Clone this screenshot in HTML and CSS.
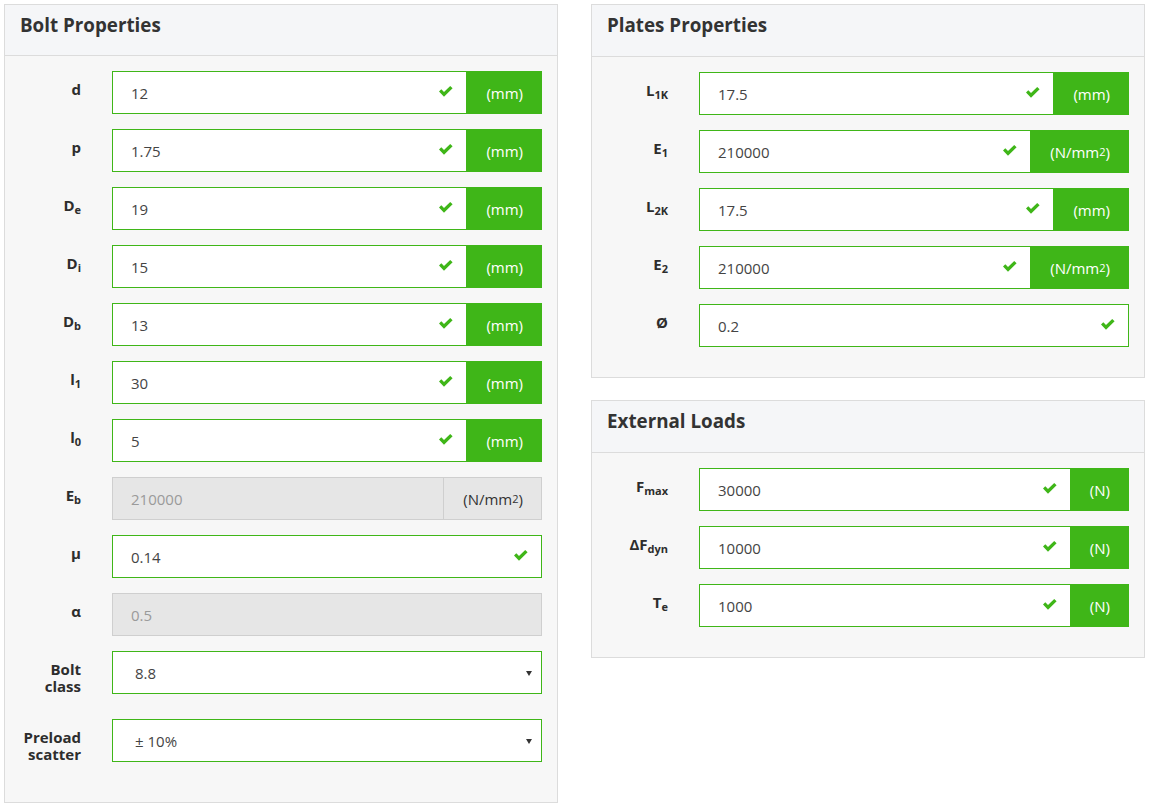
FILE: index.html
```html
<!DOCTYPE html>
<html>
<head>
<meta charset="utf-8">
<link rel="stylesheet" href="styles.css">
</head>
<body>
<div class="page">
  <div class="column">
    <section class="panel">
      <div class="panel-heading"><h3>Bolt Properties</h3></div>
      <div class="panel-body">
        <div class="form-group">
          <label class="control-label">d</label>
          <div class="input-group">
            <div class="input-wrap"><input class="form-control" value="12"><svg class="check" viewBox="0 0 14 11"><path d="M0 5.6 L2.3 3.3 L5 6 L11.2 0 L13.6 2.3 L5 10.8 Z"/></svg></div>
            <span class="addon">(mm)</span>
          </div>
        </div>
        <div class="form-group">
          <label class="control-label">p</label>
          <div class="input-group">
            <div class="input-wrap"><input class="form-control" value="1.75"><svg class="check" viewBox="0 0 14 11"><path d="M0 5.6 L2.3 3.3 L5 6 L11.2 0 L13.6 2.3 L5 10.8 Z"/></svg></div>
            <span class="addon">(mm)</span>
          </div>
        </div>
        <div class="form-group">
          <label class="control-label">D<sub>e</sub></label>
          <div class="input-group">
            <div class="input-wrap"><input class="form-control" value="19"><svg class="check" viewBox="0 0 14 11"><path d="M0 5.6 L2.3 3.3 L5 6 L11.2 0 L13.6 2.3 L5 10.8 Z"/></svg></div>
            <span class="addon">(mm)</span>
          </div>
        </div>
        <div class="form-group">
          <label class="control-label">D<sub>i</sub></label>
          <div class="input-group">
            <div class="input-wrap"><input class="form-control" value="15"><svg class="check" viewBox="0 0 14 11"><path d="M0 5.6 L2.3 3.3 L5 6 L11.2 0 L13.6 2.3 L5 10.8 Z"/></svg></div>
            <span class="addon">(mm)</span>
          </div>
        </div>
        <div class="form-group">
          <label class="control-label">D<sub>b</sub></label>
          <div class="input-group">
            <div class="input-wrap"><input class="form-control" value="13"><svg class="check" viewBox="0 0 14 11"><path d="M0 5.6 L2.3 3.3 L5 6 L11.2 0 L13.6 2.3 L5 10.8 Z"/></svg></div>
            <span class="addon">(mm)</span>
          </div>
        </div>
        <div class="form-group">
          <label class="control-label">l<sub>1</sub></label>
          <div class="input-group">
            <div class="input-wrap"><input class="form-control" value="30"><svg class="check" viewBox="0 0 14 11"><path d="M0 5.6 L2.3 3.3 L5 6 L11.2 0 L13.6 2.3 L5 10.8 Z"/></svg></div>
            <span class="addon">(mm)</span>
          </div>
        </div>
        <div class="form-group">
          <label class="control-label">l<sub>0</sub></label>
          <div class="input-group">
            <div class="input-wrap"><input class="form-control" value="5"><svg class="check" viewBox="0 0 14 11"><path d="M0 5.6 L2.3 3.3 L5 6 L11.2 0 L13.6 2.3 L5 10.8 Z"/></svg></div>
            <span class="addon">(mm)</span>
          </div>
        </div>
        <div class="form-group">
          <label class="control-label">E<sub>b</sub></label>
          <div class="input-group disabled">
            <div class="input-wrap"><input class="form-control" value="210000" disabled></div>
            <span class="addon">(N/mm<sup>2</sup>)</span>
          </div>
        </div>
        <div class="form-group">
          <label class="control-label">μ</label>
          <div class="input-group">
            <div class="input-wrap"><input class="form-control" value="0.14"><svg class="check" viewBox="0 0 14 11"><path d="M0 5.6 L2.3 3.3 L5 6 L11.2 0 L13.6 2.3 L5 10.8 Z"/></svg></div>
          </div>
        </div>
        <div class="form-group">
          <label class="control-label">α</label>
          <div class="input-group disabled">
            <div class="input-wrap"><input class="form-control" value="0.5" disabled></div>
          </div>
        </div>
        <div class="form-group">
          <label class="control-label">Bolt<br>class</label>
          <div class="select-wrap">
            <select class="form-control select"><option>8.8</option></select>
          </div>
        </div>
        <div class="form-group">
          <label class="control-label">Preload<br>scatter</label>
          <div class="select-wrap">
            <select class="form-control select"><option>± 10%</option></select>
          </div>
        </div>
      </div>
    </section>
  </div>

  <div class="column">
    <section class="panel panel-right">
      <div class="panel-heading"><h3>Plates Properties</h3></div>
      <div class="panel-body">
        <div class="form-group">
          <label class="control-label">L<sub>1K</sub></label>
          <div class="input-group">
            <div class="input-wrap"><input class="form-control" value="17.5"><svg class="check" viewBox="0 0 14 11"><path d="M0 5.6 L2.3 3.3 L5 6 L11.2 0 L13.6 2.3 L5 10.8 Z"/></svg></div>
            <span class="addon">(mm)</span>
          </div>
        </div>
        <div class="form-group">
          <label class="control-label">E<sub>1</sub></label>
          <div class="input-group">
            <div class="input-wrap"><input class="form-control" value="210000"><svg class="check" viewBox="0 0 14 11"><path d="M0 5.6 L2.3 3.3 L5 6 L11.2 0 L13.6 2.3 L5 10.8 Z"/></svg></div>
            <span class="addon">(N/mm<sup>2</sup>)</span>
          </div>
        </div>
        <div class="form-group">
          <label class="control-label">L<sub>2K</sub></label>
          <div class="input-group">
            <div class="input-wrap"><input class="form-control" value="17.5"><svg class="check" viewBox="0 0 14 11"><path d="M0 5.6 L2.3 3.3 L5 6 L11.2 0 L13.6 2.3 L5 10.8 Z"/></svg></div>
            <span class="addon">(mm)</span>
          </div>
        </div>
        <div class="form-group">
          <label class="control-label">E<sub>2</sub></label>
          <div class="input-group">
            <div class="input-wrap"><input class="form-control" value="210000"><svg class="check" viewBox="0 0 14 11"><path d="M0 5.6 L2.3 3.3 L5 6 L11.2 0 L13.6 2.3 L5 10.8 Z"/></svg></div>
            <span class="addon">(N/mm<sup>2</sup>)</span>
          </div>
        </div>
        <div class="form-group">
          <label class="control-label">Ø</label>
          <div class="input-group">
            <div class="input-wrap"><input class="form-control" value="0.2"><svg class="check" viewBox="0 0 14 11"><path d="M0 5.6 L2.3 3.3 L5 6 L11.2 0 L13.6 2.3 L5 10.8 Z"/></svg></div>
          </div>
        </div>
      </div>
    </section>

    <section class="panel panel-right">
      <div class="panel-heading"><h3>External Loads</h3></div>
      <div class="panel-body">
        <div class="form-group">
          <label class="control-label">F<sub>max</sub></label>
          <div class="input-group">
            <div class="input-wrap"><input class="form-control" value="30000"><svg class="check" viewBox="0 0 14 11"><path d="M0 5.6 L2.3 3.3 L5 6 L11.2 0 L13.6 2.3 L5 10.8 Z"/></svg></div>
            <span class="addon">(N)</span>
          </div>
        </div>
        <div class="form-group">
          <label class="control-label">ΔF<sub>dyn</sub></label>
          <div class="input-group">
            <div class="input-wrap"><input class="form-control" value="10000"><svg class="check" viewBox="0 0 14 11"><path d="M0 5.6 L2.3 3.3 L5 6 L11.2 0 L13.6 2.3 L5 10.8 Z"/></svg></div>
            <span class="addon">(N)</span>
          </div>
        </div>
        <div class="form-group">
          <label class="control-label">T<sub>e</sub></label>
          <div class="input-group">
            <div class="input-wrap"><input class="form-control" value="1000"><svg class="check" viewBox="0 0 14 11"><path d="M0 5.6 L2.3 3.3 L5 6 L11.2 0 L13.6 2.3 L5 10.8 Z"/></svg></div>
            <span class="addon">(N)</span>
          </div>
        </div>
      </div>
    </section>
  </div>
</div>
</body>
</html>
```

FILE: styles.css
```css
* { box-sizing: border-box; }

html, body {
  margin: 0;
  padding: 0;
  background: #ffffff;
}

body {
  font-family: "Open Sans", "Liberation Sans", sans-serif;
  font-size: 15px;
  color: #333;
}

.page {
  display: grid;
  grid-template-columns: 554px 554px;
  column-gap: 33px;
  padding: 4px 0 0 4px;
  align-items: start;
}

.column {
  display: flex;
  flex-direction: column;
  gap: 22px;
}

.panel {
  border: 1px solid #dcdcdc;
  background: #f7f7f7;
}

.panel-heading {
  background: #f5f6f8;
  border-bottom: 1px solid #dcdcdc;
  padding: 10px 15px 20px 15px;
  height: 51px;
}

.panel-right .panel-heading {
  height: 52px;
}

.panel-heading h3 {
  margin: 0;
  font-size: 18.8px;
  line-height: 20px;
  font-weight: 700;
  color: #333;
}

.panel-body {
  padding: 15px 15px 15px 0;
}

.form-group {
  display: grid;
  grid-template-columns: 92px 1fr;
  column-gap: 15px;
  margin-bottom: 15px;
}

.control-label {
  text-align: right;
  padding: 10px 16px 9px 0;
  font-size: 15px;
  line-height: 17px;
  font-weight: 700;
  color: #2d2d2d;
}

.control-label sub {
  font-size: 11px;
  line-height: 0;
  vertical-align: -3px;
}

.input-group {
  display: flex;
  height: 43px;
}

.input-wrap {
  position: relative;
  flex: 1;
}

.form-control {
  display: block;
  width: 100%;
  height: 43px;
  margin: 0;
  padding: 0 18px;
  font-family: "Open Sans", "Liberation Sans", sans-serif;
  font-size: 15px;
  color: #444;
  background: #fff;
  border: 1px solid #3fb618;
  border-radius: 0;
  outline: none;
}

.input-group .addon {
  display: flex;
  align-items: center;
  padding: 0 18px 0 19px;
  background: #3fb618;
  border: 1px solid #3fb618;
  border-left: 0;
  color: #fff;
  font-size: 15px;
  white-space: nowrap;
}

.addon sup {
  font-size: 11px;
  line-height: 0;
  vertical-align: 8px;
}

.check {
  position: absolute;
  right: 14px;
  top: 15px;
  width: 14px;
  height: 11px;
  fill: #3fb618;
}

.input-group.disabled .form-control {
  background: #e6e6e6;
  border-color: #cfcfcf;
  color: #9a9a9a;
}

.input-group.disabled .addon {
  background: #e6e6e6;
  border: 1px solid #cfcfcf;
  color: #333;
  margin-left: -1px;
  padding: 0 18px 0 19px;
}

.select-wrap {
  position: relative;
  height: 43px;
}

.select {
  -webkit-appearance: none;
  appearance: none;
  padding-left: 22px;
  color: #444;
}

.select-wrap::after {
  content: "";
  position: absolute;
  right: 10px;
  top: 20px;
  border-left: 3px solid transparent;
  border-right: 3px solid transparent;
  border-top: 5px solid #333;
}
```
